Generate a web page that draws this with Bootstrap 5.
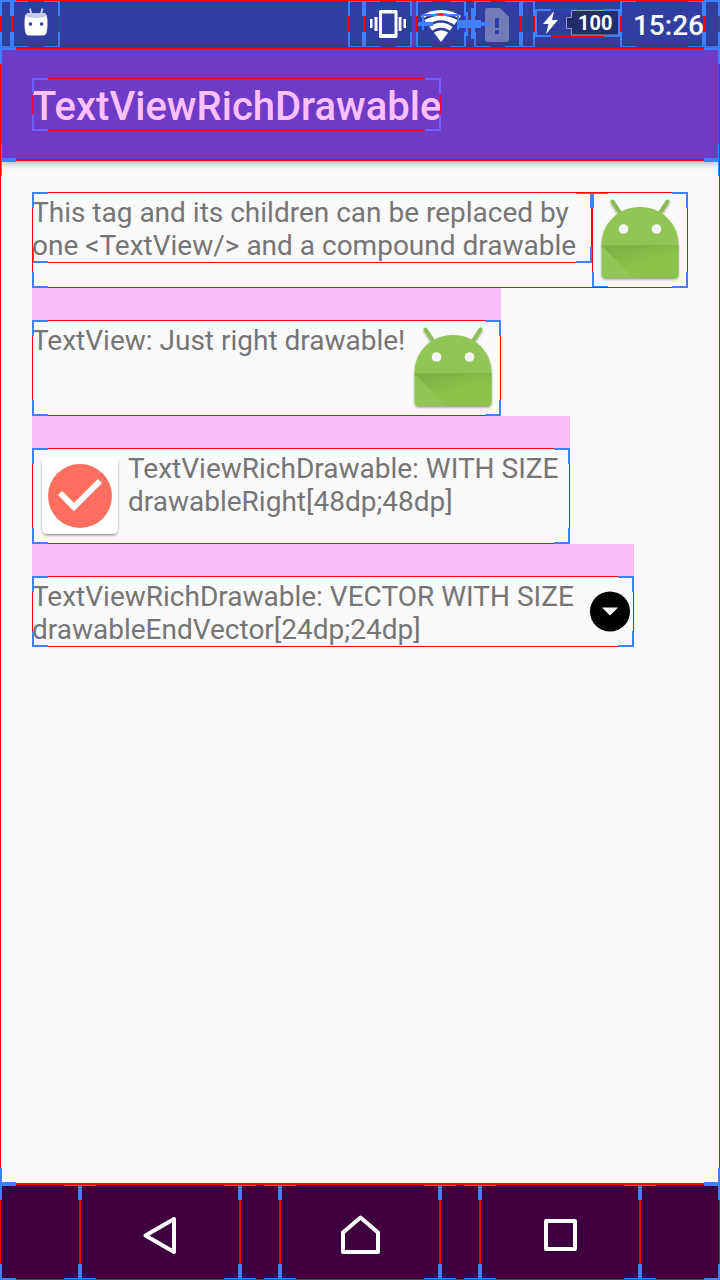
<!DOCTYPE html>
<html lang="en">
<head>
<meta charset="utf-8">
<meta name="viewport" content="width=device-width, initial-scale=1">
<title>TextViewRichDrawable</title>
<link rel="stylesheet" href="https://cdn.jsdelivr.net/npm/bootstrap@5.3.0/dist/css/bootstrap.min.css">
<style>
body{font-family:Roboto,"Liberation Sans",sans-serif;background:#fafafa;color:#757575;font-size:28px;line-height:33px}
svg{display:block;flex:none}
/* layout bounds: thin red frame with blue corner marks */
.bounds{position:relative}
.bounds::after{content:"";position:absolute;inset:0;pointer-events:none;
--b:linear-gradient(var(--mark,#4080ff) 0 0);--r:linear-gradient(var(--edge,#f00) 0 0);
background:var(--b) 0 0/16px 2px,var(--b) 0 0/2px 16px,var(--b) 100% 0/16px 2px,var(--b) 100% 0/2px 16px,
var(--b) 0 100%/16px 2px,var(--b) 0 100%/2px 16px,var(--b) 100% 100%/16px 2px,var(--b) 100% 100%/2px 16px,
var(--r) 0 0/100% 1px,var(--r) 0 100%/100% 1px,var(--r) 0 0/1px 100%,var(--r) 100% 0/1px 100%;background-repeat:no-repeat}
.status-bar{height:48px;background:#303f9f;color:#fff}
.gap-end{width:16px}.gap-mid{width:14px}.gap-start{width:12px}
.status-icon{width:48px}
.sliver{width:4px;background:#6639bb}
.wifi-box{width:50px}.sim-box{width:47px}
.signal-marks{position:absolute;left:0;top:0;z-index:1}
.battery-box{width:85px;height:28px;bottom:1px}
.battery-level{font-size:20px;line-height:28px;font-weight:700;left:43px;top:0}
.clock{width:84px;font-weight:500;padding-top:2px}
.app-bar{height:112px;background:#6e3bc6;padding:0 32px;box-shadow:0 2px 8px rgba(0,0,0,.4)}
.app-title{font-size:40px;line-height:49px;padding-top:4px;font-weight:500;color:#ffc0ff;--mark:#6e60ff;--edge:#f0003c;margin:0}
.content-area{padding:32px}
.copy{padding:4px 0 1px;margin:0}
.band{border-top:32px solid #f9bdfa;width:fit-content;max-width:100%}
.pad-end{padding-right:12px}
.copy-vector{width:554px}
.nav-bar{height:96px;background:#3f003f}
.side{flex:2 1 0}.key{flex:4 1 0}.between{flex:1 1 0}
.key{background:none;border:0;padding:0}
</style>
</head>
<body class="min-vh-100 d-flex flex-column">
<svg width="0" height="0" class="position-absolute" aria-hidden="true"><defs>
<linearGradient id="fold" x1="0" y1="0" x2=".6" y2="1"><stop offset="0" stop-color="#79ab45"/><stop offset=".6" stop-color="#8bc34a"/></linearGradient>
<linearGradient id="seam" x1="0" y1="0" x2="0" y2="1"><stop offset="0" stop-color="#78a83e"/><stop offset="1" stop-color="#8bc34a" stop-opacity="0"/></linearGradient>
<filter id="soft" x="-10%" y="-10%" width="120%" height="125%"><feDropShadow dx="0" dy="1.5" stdDeviation="1.2" flood-opacity=".4"/></filter>
<symbol id="robot" viewBox="0 0 96 96"><g filter="url(#soft)">
<path d="M20.500 9.500 32 27M75.500 9.500 64 27" stroke="#8bbd57" stroke-width="4" stroke-linecap="round"/>
<path d="M9.500 53C9.500 31 27 15 48 15S86.500 31 86.500 53V81.500Q86.500 86 82 86H14Q9.500 86 9.500 81.500Z" fill="#8fc654"/></g>
<path d="M9.500 54H86.500V81.500Q86.500 86 82 86H42Z" fill="url(#fold)"/>
<path d="M9.500 53.500H86.500V57H9.500Z" fill="url(#seam)"/>
<circle cx="31.500" cy="37" r="4.800" fill="#f5f5f5"/><circle cx="64.500" cy="37" r="4.800" fill="#f5f5f5"/></symbol>
</defs></svg>

<header class="status-bar bounds d-flex">
  <div class="gap-start bounds"></div>
  <div class="status-icon bounds">
    <svg width="48" height="48" viewBox="0 0 48 48"><path d="M18 8.500 19.200 14M30.500 8.500 29 14" stroke="#dfe1f2" stroke-width="1.700"/><path d="M12.500 23Q12.500 13 16 13H32Q35.500 13 35.500 23Q35.500 31 34 34Q33 35.500 28 35.500H20Q14.500 35.500 14 34Q12.500 31 12.500 23Z" fill="#fff"/><path d="M13 16Q14 12.500 18 13H30Q34 12.500 35 16Q30 18.500 24 18Q17 18.500 13 16Z" fill="#c5cae9"/><circle cx="18.500" cy="24" r="1.800" fill="#303f9f"/><circle cx="29.600" cy="24" r="1.800" fill="#303f9f"/></svg>
  </div>
  <div class="flex-fill"></div>
  <div class="gap-end bounds"></div>
  <div class="status-icon bounds">
    <svg width="48" height="48" viewBox="0 0 48 48" fill="#fff"><path fill-rule="evenodd" d="M16.500 10H32Q33.500 10 33.500 11.500V36.500Q33.500 38 32 38H16.500Q15 38 15 36.500V11.500Q15 10 16.500 10ZM18 13.500V34H30.500V13.500Z"/><path d="M10.500 17H13.500V31H10.500ZM6 19H8.500V28H6ZM34.700 17H37.500V31H34.700ZM39.500 19H42V28H39.500Z"/></svg>
  </div>
  <div class="sliver"></div>
  <div class="wifi-box bounds">
    <svg width="50" height="48" viewBox="0 0 50 48"><path d="M25 42 5 16Q14 10 25 10T45 16Z" fill="#fff"/><path d="M6 20Q25 9 44 20M11 27Q25 16 39 27M15 33Q25 25 35 33" fill="none" stroke="#303f9f" stroke-width="2.500"/></svg>
    <svg class="signal-marks" width="74" height="48" viewBox="0 0 74 48"><path fill="#4080ff" d="M6 14H43V16H6ZM6 15H8V30H6ZM41 15H43V30H41ZM2 22H17V26H2ZM41 20H65V28H41ZM65 22H73V26H65ZM55 8H59V39H55ZM50 12H52V36H50Z"/><path fill="#f00" d="M22 14H27V15H22Z"/></svg>
  </div>
  <div class="px-1"></div>
  <div class="sim-box bounds">
    <svg width="47" height="48" viewBox="0 0 47 48"><path d="M13 8H26L35 17V39Q35 42 32 42H14Q11 42 11 39V11Q11 8 13 8Z" fill="#747bb9"/><path d="M21 18H25V28H21ZM21 30H25V34H21Z" fill="#303f9f"/></svg>
  </div>
  <div class="gap-mid bounds"></div>
  <div class="battery-box bounds align-self-center">
    <svg width="85" height="28" viewBox="0 0 85 28"><path d="M19 2 8 15H13.500L11 25 23 11H17Z" fill="#fff"/><path d="M36.500 1.500H84V26H36.500V19.500H31.500V8.500H36.500Z" fill="#232d6c" stroke="#969bb3"/></svg>
    <span class="battery-level position-absolute">100</span>
  </div>
  <div class="clock bounds d-flex align-items-center justify-content-end">15:26</div>
  <div class="gap-end bounds"></div>
</header>

<div class="bounds flex-grow-1 d-flex flex-column">
  <div class="app-bar bounds d-flex align-items-center">
    <h1 class="app-title bounds">TextViewRichDrawable</h1>
  </div>
  <main class="content-area bounds flex-grow-1">
    <div class="bounds d-flex align-items-start">
      <p class="copy bounds flex-fill">This tag and its children can be replaced by<br>one &lt;TextView/&gt; and a compound drawable</p>
      <div class="bounds"><svg width="96" height="96"><use href="#robot"/></svg></div>
    </div>
    <div class="band">
      <div class="bounds d-flex align-items-start">
        <p class="copy">TextView: Just right drawable!</p>
        <svg width="96" height="96"><use href="#robot"/></svg>
      </div>
    </div>
    <div class="band">
      <div class="bounds d-flex align-items-start pad-end">
        <svg width="96" height="96" viewBox="0 0 96 96"><rect x="10" y="10" width="76" height="76" rx="5" fill="#fff" filter="url(#soft)"/><circle cx="48" cy="48" r="32" fill="#ff6f60"/><path d="M28 45 42 59 68 33" fill="none" stroke="#fff" stroke-width="6"/></svg>
        <p class="copy">TextViewRichDrawable: WITH SIZE<br>drawableRight[48dp;48dp]</p>
      </div>
    </div>
    <div class="band">
      <div class="bounds d-flex align-items-center">
        <p class="copy copy-vector">TextViewRichDrawable: VECTOR WITH SIZE<br>drawableEndVector[24dp;24dp]</p>
        <svg width="48" height="48" viewBox="0 0 48 48"><circle cx="24" cy="23.500" r="20"/><path d="M16 19.500H32L24 27.500Z" fill="#fff"/></svg>
      </div>
    </div>
  </main>
</div>

<nav class="nav-bar bounds d-flex" aria-label="System">
  <div class="side bounds"></div>
  <button type="button" class="key bounds d-flex justify-content-center align-items-center" aria-label="Back"><svg width="48" height="48" viewBox="0 0 48 48" fill="none" stroke="#fff" stroke-width="4" stroke-linejoin="round"><path d="M9.500 27.500 38 11V44Z"/></svg></button>
  <div class="between bounds"></div>
  <button type="button" class="key bounds d-flex justify-content-center align-items-center" aria-label="Home"><svg width="48" height="48" viewBox="0 0 48 48" fill="none" stroke="#fff" stroke-width="4"><path d="M7 24.500 24.500 9.500 42 24.500V44H7Z" stroke-linejoin="round"/></svg></button>
  <div class="between bounds"></div>
  <button type="button" class="key bounds d-flex justify-content-center align-items-center" aria-label="Recent apps"><svg width="48" height="48" viewBox="0 0 48 48" fill="none" stroke="#fff" stroke-width="4" stroke-linejoin="round"><path d="M10 13H39V41H10Z"/></svg></button>
  <div class="side bounds"></div>
</nav>
<script src="https://cdn.jsdelivr.net/npm/bootstrap@5.3.0/dist/js/bootstrap.bundle.min.js"></script>
</body>
</html>
